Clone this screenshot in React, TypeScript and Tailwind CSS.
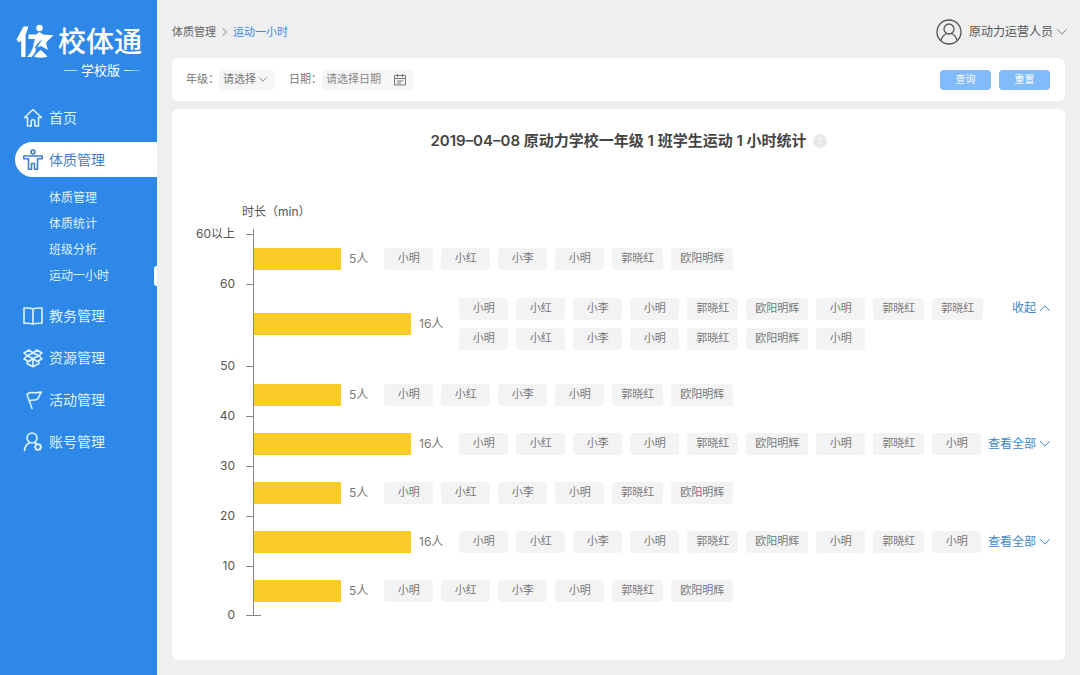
import { useState } from "react";
import type { ReactNode } from "react";

const A = ["小明", "小红", "小李", "小明", "郭晓红", "欧阳明辉"];
const FULL = [...A, "小明", "郭晓红", "郭晓红", ...A, "小明"];
const LONG = [...A, "小明", "郭晓红", "小明", ...A, "小明"];

type Group = { id: number; count: number; names: string[]; open?: boolean };

const GROUPS: Group[] = [
  { id: 0, count: 5, names: A },
  { id: 1, count: 16, names: FULL, open: true },
  { id: 2, count: 5, names: A },
  { id: 3, count: 16, names: LONG },
  { id: 4, count: 5, names: A },
  { id: 5, count: 16, names: LONG },
  { id: 6, count: 5, names: A },
];

const TICKS = ["60以上", "60", "50", "40", "30", "20", "10"];

function Icon({ children, className = "size-5" }: { children: ReactNode; className?: string }) {
  return (
    <svg viewBox="0 0 20 20" fill="none" stroke="currentColor" strokeWidth="1.6" strokeLinecap="round" strokeLinejoin="round" className={`shrink-0 ${className}`} aria-hidden="true">
      {children}
    </svg>
  );
}

function Chevron({ up = false, className = "" }: { up?: boolean; className?: string }) {
  return (
    <svg viewBox="0 0 10 6" fill="none" stroke="currentColor" strokeLinecap="round" strokeLinejoin="round" className={`shrink-0 ${className}`} aria-hidden="true">
      <path d={up ? "M.5 5.5 5 .8l4.5 4.7" : "M.5.5 5 5.2 9.5.5"} />
    </svg>
  );
}

function Logo() {
  return (
    <div className="pt-6 pl-4 text-white">
      <div className="flex items-center gap-1">
        <svg viewBox="0 0 38 36" className="h-9 w-[38px] shrink-0" fill="currentColor" aria-hidden="true">
          <path d="M7.500 2.500h5L9.500 11v22H5.200V16.500L3 18.500.5 15.500Z" />
          <circle cx="23.500" cy="4" r="3.200" />
          <path d="M12.500 10.500h7.500l3.500-2.500 3.500 2.500 10.500.7-7.500 7.300 1.800 7.500-6.800-4-3.500 1.500c1.500-3 3-5.500 5-8-3.500 2-6 5-8 8.500L17.500 20l1.500-5h-6.500Z" />
          <path d="M17.500 21c-1 5-3 8.500-6.500 12h4.500c2.500-2.500 4-5 4.500-8Z" />
          <path d="M18 32.500c1.500-1.500 2.500-3 6.500-6.500 3 2 5 4.500 7 6.500-2.500 1.500-11 1.500-13.500 0Z" />
        </svg>
        <span className="text-[28px] leading-9 font-medium">校体通</span>
      </div>
      <div className="ml-12 flex items-center gap-1 text-[13px] leading-5">
        <span className="h-px w-[13px] bg-white/70" />
        学校版
        <span className="h-px w-4 bg-linear-to-r from-white to-white/20" />
      </div>
    </div>
  );
}

function NavItem({ label, active = false, children }: { label: string; active?: boolean; children: ReactNode }) {
  return (
    <a
      href="#"
      className={`ml-[15px] flex h-[35px] items-center gap-1.5 rounded-l-full pl-2 text-sm ${active ? "bg-white text-[#3f7fc4]" : "text-[#dcf3ff]"}`}
    >
      {children}
      {label}
    </a>
  );
}

function Sidebar() {
  const subs = ["体质管理", "体质统计", "班级分析", "运动一小时"];
  return (
    <aside className="w-[157px] shrink-0 bg-[#2e88e8]">
      <Logo />
      <nav className="mt-5 flex flex-col gap-[7px]">
        <NavItem label="首页">
          <Icon>
            <path d="M4.500 9.500H1.500L10 1.500l8.500 8h-3V18h-3.700v-4.500a1.800 1.800 0 0 0-3.600 0V18H4.500Z" />
          </Icon>
        </NavItem>
        <NavItem label="体质管理" active>
          <Icon className="h-[22px] w-5">
            <circle cx="10" cy="2" r="2" />
            <path d="M.8 6h18.400v2.800h-4.700v10.400h-3v-5.700h-3v5.700h-3V8.800H.8Z" />
          </Icon>
        </NavItem>
        <ul className="pt-px pb-0.5 text-xs text-[#dcf3ff]">
          {subs.map((s, i) => (
            <li key={s}>
              <a href="#" className="flex h-[26px] items-center justify-between pl-[49px]">
                {s}
                {i === 3 && <span className="h-5 w-[3px] rounded-l-sm bg-white" />}
              </a>
            </li>
          ))}
        </ul>
        <NavItem label="教务管理">
          <Icon>
            <path d="M10 3C8 1.800 4.500 2 1 2v15.300c3.500 0 7-.2 9 1 2-1.200 5.500-1 9-1V2c-3.500 0-7-.2-9 1Zm0 0v15" />
          </Icon>
        </NavItem>
        <NavItem label="资源管理">
          <Icon>
            <path d="m10 5-4-3-5 3 3 2.700L1 11l5 2.500 4-3 4 3 5-2.500-3-3.300L19 5l-5-3-4 3Zm-6 2.700 6-2.700 6 2.700-6 2.800ZM4 12.500v3l6 3.300 6-3.300v-3M10 10.500v8.300" />
          </Icon>
        </NavItem>
        <NavItem label="活动管理">
          <Icon>
            <path d="M9 18.500 4 4.500C7 .5 10 3.500 13.500 2.700c1.600-.4 3-.8 5-.5-2.500 2-2 6.800-5.500 7.600-2.500.6-4-.4-6.500 1.200" />
          </Icon>
        </NavItem>
        <NavItem label="账号管理">
          <Icon>
            <circle cx="9" cy="6" r="5" />
            <path d="M1.500 18.500c.3-3.800 2-6.200 5-7.700M11.500 10.500l1.500.8" />
            <circle cx="15" cy="15" r="2.700" />
            <path d="M15 11.500v.8M15 17.700v.8M11.500 15h.8M17.700 15h.8M12.500 12.500l.6.600M16.900 16.900l.6.600M17.500 12.500l-.6.600M13.100 16.900l-.6.600" />
          </Icon>
        </NavItem>
      </nav>
    </aside>
  );
}

function Header() {
  return (
    <header className="flex h-[58px] items-center justify-between pt-1.5 text-[11px] text-[#666]">
      <nav aria-label="breadcrumb" className="flex items-center gap-1.5">
        <a href="#">体质管理</a>
        <svg viewBox="0 0 6 10" className="h-2 w-[5px]" fill="none" stroke="currentColor" aria-hidden="true">
          <path d="m.5.500 5 4.500-5 4.500" />
        </svg>
        <a href="#" className="text-[#3f8be3]">运动一小时</a>
      </nav>
      <button type="button" className="-mr-0.5 flex items-center gap-[7px] text-xs text-[#555]">
        <svg viewBox="0 0 26 26" className="size-[26px]" fill="none" stroke="currentColor" strokeWidth="1.300" aria-hidden="true">
          <circle cx="13" cy="13" r="12" />
          <circle cx="13" cy="10" r="5" />
          <path d="M5 21.500c1-4 3-6 5.500-7m5 0c2.500 1 4.500 3 5.500 7" />
        </svg>
        <span className="flex items-center gap-1">
          原动力运营人员
          <Chevron className="h-1.5 w-2.5 text-[#888]" />
        </span>
      </button>
    </header>
  );
}

function Filters() {
  return (
    <form className="flex h-[43px] items-center rounded-md bg-white pr-[15px] pl-[14px] text-[11px] text-[#777]" onSubmit={(e) => e.preventDefault()}>
      <label htmlFor="grade">年级：</label>
      <div className="flex h-5 w-14 items-center rounded-sm bg-[#f6f6f7] pr-2">
        <select id="grade" className="min-w-0 flex-1 appearance-none bg-transparent pl-1 outline-none">
          <option>请选择</option>
        </select>
        <Chevron className="h-[5px] w-2" />
      </div>
      <label htmlFor="date" className="ml-[14px]">日期：</label>
      <div className="flex h-5 w-[92px] items-center rounded-sm bg-[#f6f6f7] pr-2">
        <input id="date" type="text" placeholder="请选择日期" className="min-w-0 flex-1 bg-transparent pl-1 outline-none placeholder:text-[#888]" />
        <svg viewBox="0 0 12 12" className="size-3" fill="none" stroke="currentColor" aria-hidden="true">
          <path d="M.5 1.500h11v9.500H.5ZM.5 4.500h11M3.500 0v3M8.500 0v3M3 7h6M3 9h4" />
        </svg>
      </div>
      <div className="ml-auto flex gap-2 text-[10px] text-white">
        <button type="submit" className="h-5 w-[51px] rounded bg-[#82bbfa]">查询</button>
        <button type="reset" className="h-5 w-[51px] rounded bg-[#82bbfa]">重置</button>
      </div>
    </form>
  );
}

function BarRow({ group }: { group: Group }) {
  const [open, setOpen] = useState(Boolean(group.open));
  const long = group.count > 9;
  const names = long && !open ? group.names.slice(0, 9) : group.names;
  return (
    <li className={`flex items-center ${long && open ? "min-h-[87px] pb-1.5" : "min-h-[49px]"}`}>
      <div className={`h-[22px] shrink-0 bg-[#f9cb27] ${long ? "w-[157px]" : "w-[87px]"}`} />
      <span className="mr-4 ml-2 shrink-0 text-xs text-[#777]">{group.count}人</span>
      <ul className="flex min-w-0 flex-1 flex-wrap gap-2">
        {names.map((n, i) => (
          <li key={i} className="flex h-[22px] min-w-[49px] items-center justify-center rounded-sm bg-[#f3f3f4] px-[9px] text-[11px] text-[#777]">
            {n}
          </li>
        ))}
      </ul>
      {long && (
        <button
          type="button"
          aria-expanded={open}
          onClick={() => setOpen(!open)}
          className={`flex h-[22px] shrink-0 items-center gap-1 text-xs text-[#3d87c9] ${open ? "mt-[14px] self-start" : ""}`}
        >
          {open ? "收起" : "查看全部"}
          <Chevron up={open} className="h-1.5 w-2.5" />
        </button>
      )}
    </li>
  );
}

function Chart() {
  return (
    <section className="mt-2 mb-[15px] flex-1 rounded-md bg-white pr-[15px]">
      <h1 className="flex justify-center pt-5 pl-[15px] text-[15px] leading-6 font-semibold text-[#444]">
        <span className="relative">
          2019–04–08 原动力学校一年级 1 班学生运动 1 小时统计
          <span className="absolute top-[5px] left-full ml-1.5 flex size-3.5 items-center justify-center rounded-full bg-[#e9e9eb] text-[9px] text-[#f8f8f8]">?</span>
        </span>
      </h1>
      <p className="mt-[49px] pl-[70px] text-xs leading-5 text-[#555]">时长（min）</p>
      <div className="mt-[7px] flex">
        <div className="w-[82px] shrink-0 border-r border-[#888] pt-[5px]">
          {TICKS.map((t) => (
            <div key={t} className={t === "60" ? "h-[82px]" : t === "10" ? "h-[49px]" : "h-[50px]"}>
              <div className="flex h-0 items-center justify-end gap-[11px] text-xs text-[#555]">
                {t}
                <span className="h-px w-[7px] bg-[#888]" />
              </div>
            </div>
          ))}
          <div className="-mr-2 flex h-0 items-center justify-end gap-[11px] text-xs text-[#555]">
            0
            <span className="h-px w-[15px] bg-[#888]" />
          </div>
        </div>
        <ul className="min-w-0 flex-1 pt-[5px]">
          {GROUPS.map((g) => (
            <BarRow key={g.id} group={g} />
          ))}
        </ul>
      </div>
    </section>
  );
}

export default function App() {
  return (
    <div className="flex min-h-screen bg-[#eeeff0] font-[Inter,'Noto_Sans_CJK_SC',sans-serif]">
      <Sidebar />
      <main className="flex min-w-0 flex-1 flex-col pr-[15px] pl-[15px]">
        <Header />
        <Filters />
        <Chart />
      </main>
    </div>
  );
}
